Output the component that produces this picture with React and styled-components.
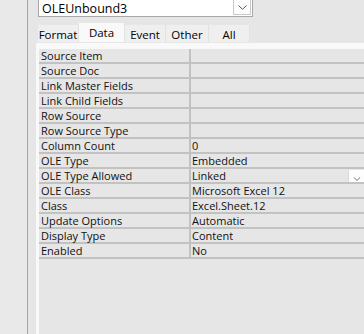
import React from 'react';
import styled, { createGlobalStyle } from 'styled-components';

const GlobalStyle = createGlobalStyle`
  html, body {
    margin: 0;
    padding: 0;
    background: #e6e6e6;
    overflow: hidden;
  }
  body {
    font-family: "Open Sans", "Noto Sans", sans-serif;
    font-size: 11px;
    color: #111;
  }
`;

const Frame = styled.div`
  display: flex;
  width: 364px;
  height: 334px;
  overflow: hidden;
`;

const Gutter = styled.div`
  width: 27px;
  flex: none;
  background: #e9e9e9;
  border-right: 1px solid #a3a3a3;
`;

const Main = styled.div`
  flex: 1;
  display: flex;
  flex-direction: column;
  padding-left: 9px;
  min-width: 0;
`;

const Combo = styled.div`
  display: flex;
  align-items: center;
  width: 215px;
  height: 17px;
  margin-left: 1px;
  box-sizing: border-box;
  background: #fff;
  border: 1px solid #a8a8a8;
  border-top: none;
  padding-left: 3px;
  font-size: 12.5px;
  color: #000;
`;

const ComboText = styled.span`
  flex: 1;
  line-height: 15px;
`;

const DropButton = styled.div`
  display: flex;
  align-items: center;
  justify-content: center;
  width: 18px;
  height: 15px;
  margin-right: 1px;
  margin-bottom: 1px;
  box-sizing: border-box;
  background: #fdfdfd;
  border: 1px solid #c8c8c8;
  border-top: none;
`;

const Tabs = styled.div`
  display: flex;
  align-items: flex-end;
  height: 19px;
  margin-top: 6px;
  margin-bottom: 1px;
  margin-left: 1px;
`;

const Tab = styled.div`
  display: flex;
  align-items: center;
  justify-content: center;
  box-sizing: border-box;
  width: ${(p) => p.$w}px;
  height: ${(p) => (p.$active ? 19 : 17)}px;
  padding-top: ${(p) => (p.$active ? 0 : 1)}px;
  background: ${(p) => (p.$active ? '#f9f9f9' : '#efefef')};
  border-right: 1px solid #e2e2e2;
  font-size: 11.5px;
  color: #000;
  white-space: nowrap;
`;

const Panel = styled.div`
  flex: 1;
  margin-left: -1px;
  border-top: 6px solid #f9f9f9;
  border-left: 3px solid #f9f9f9;
  background: #e6e6e6;
`;

const Row = styled.div`
  display: flex;
  height: 15px;
  box-sizing: border-box;
  border-bottom: 2px solid #c2c2c2;
`;

const Label = styled.div`
  width: 152px;
  flex: none;
  box-sizing: border-box;
  border-right: 2px solid #c2c2c2;
  padding-left: 2px;
  line-height: 13px;
  white-space: nowrap;
`;

const Value = styled.div`
  flex: 1;
  display: flex;
  justify-content: space-between;
  align-items: flex-start;
  padding-left: 1px;
  line-height: 13px;
  white-space: nowrap;
`;

const CellButton = styled.div`
  display: flex;
  align-items: flex-end;
  justify-content: center;
  width: 16px;
  height: 12px;
  margin-top: 1px;
  background: #fdfdfd;
  border-left: 1px solid #d8d8d8;
  padding-bottom: 1px;
  box-sizing: border-box;
`;

const Chevron = ({ w = 9, h = 5 }) => (
  <svg width={w} height={h} viewBox="0 0 9 5">
    <path d="M0.5 0.5 L4.5 4.3 L8.5 0.5" fill="none" stroke="#555" strokeWidth="1" />
  </svg>
);

const rows = [
  ['Source Item', ''],
  ['Source Doc', ''],
  ['Link Master Fields', ''],
  ['Link Child Fields', ''],
  ['Row Source', ''],
  ['Row Source Type', ''],
  ['Column Count', '0'],
  ['OLE Type', 'Embedded'],
  ['OLE Type Allowed', 'Linked', true],
  ['OLE Class', 'Microsoft Excel 12'],
  ['Class', 'Excel.Sheet.12'],
  ['Update Options', 'Automatic'],
  ['Display Type', 'Content'],
  ['Enabled', 'No'],
];

const tabs = [
  ['Format', 41],
  ['Data', 46, true],
  ['Event', 41],
  ['Other', 43],
  ['All', 41],
];

export default function App() {
  return (
    <>
      <GlobalStyle />
      <Frame>
        <Gutter />
        <Main>
          <Combo>
            <ComboText>OLEUnbound3</ComboText>
            <DropButton>
              <Chevron />
            </DropButton>
          </Combo>
          <Tabs>
            {tabs.map(([name, w, active]) => (
              <Tab key={name} $w={w} $active={active}>
                {name}
              </Tab>
            ))}
          </Tabs>
          <Panel>
            {rows.map(([label, value, drop]) => (
              <Row key={label}>
                <Label>{label}</Label>
                <Value>
                  <span>{value}</span>
                  {drop && (
                    <CellButton>
                      <Chevron w={8} h={4} />
                    </CellButton>
                  )}
                </Value>
              </Row>
            ))}
          </Panel>
        </Main>
      </Frame>
    </>
  );
}
